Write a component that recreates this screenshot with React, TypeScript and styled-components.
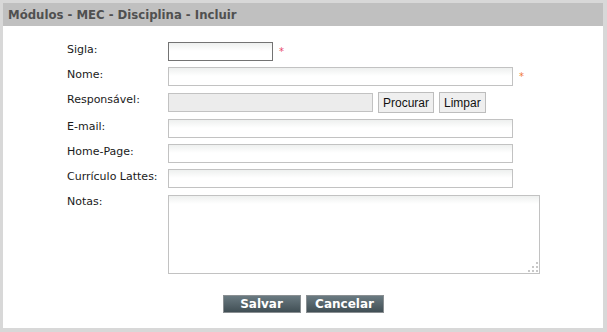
import React from 'react';
import styled, { createGlobalStyle } from 'styled-components';

const GlobalStyle = createGlobalStyle`
  html, body {
    margin: 0;
    padding: 0;
    background: #d8d8d8;
  }
  body {
    font-family: "DejaVu Sans", Verdana, sans-serif;
  }
`;

const Page = styled.div`
  padding: 3px 4px 4px 3px;
  width: 600px;
`;

const Panel = styled.div`
  background: #fff;
  height: 325px;
  display: flex;
  flex-direction: column;
`;

const Header = styled.div`
  height: 23px;
  background: #c0c0c0;
  display: flex;
  align-items: center;
  padding-left: 5px;
  font-family: "DejaVu Sans Condensed", "DejaVu Sans", sans-serif;
  font-weight: bold;
  font-size: 13px;
  color: #505050;
`;

const Form = styled.div`
  display: grid;
  grid-template-columns: 101px 1fr;
  row-gap: 6px;
  padding: 16px 0 0 64px;
`;

const Label = styled.label`
  font-size: 11px;
  color: #1a1a1a;
  padding-top: 1px;
  white-space: nowrap;
`;

const Field = styled.div`
  display: flex;
  align-items: center;
  gap: 5px;
`;

const Input = styled.input<{ $w: number; $dark?: boolean; $disabled?: boolean }>`
  box-sizing: border-box;
  width: ${(p) => p.$w}px;
  height: 19px;
  margin: 0;
  padding: 0 3px;
  border: 1px solid ${(p) => (p.$dark ? '#737373' : '#c2c2c2')};
  background: ${(p) =>
    p.$disabled ? '#ececec' : 'linear-gradient(#eef0ef, #ffffff 8px)'};
  font-size: 11px;
  outline: none;
`;

const Required = styled.span<{ $color: string }>`
  color: ${(p) => p.$color};
  font-size: 10px;
  line-height: 1;
  align-self: center;
  margin-left: 1px;
`;

const SmallButton = styled.button`
  box-sizing: border-box;
  height: 21px;
  padding: 0 4px;
  margin: 0;
  border: 1px solid #bdbdbd;
  background: #efefef;
  font-family: "Liberation Sans", Arial, sans-serif;
  font-size: 12px;
  color: #111;
`;

const AreaWrap = styled.div`
  position: relative;
  width: 372px;
  height: 79px;
  margin-top: 1px;
`;

const TextArea = styled.textarea`
  box-sizing: border-box;
  width: 372px;
  height: 79px;
  margin: 0;
  border: 1px solid #c2c2c2;
  background: linear-gradient(#eef0ef, #ffffff 8px);
  resize: none;
  outline: none;
  display: block;
`;

const Grip = styled.svg`
  position: absolute;
  right: 2px;
  bottom: 2px;
`;

const Actions = styled.div`
  display: flex;
  justify-content: center;
  gap: 5px;
  margin-top: 21px;
`;

const ActionButton = styled.button`
  box-sizing: border-box;
  width: 78px;
  height: 18px;
  padding: 0;
  border: 1px solid #8a8f92;
  background: linear-gradient(#6a7a81, #414f55);
  color: #fff;
  font-family: "DejaVu Sans", Verdana, sans-serif;
  font-weight: bold;
  font-size: 12px;
  line-height: 16px;
`;

const App: React.FC = () => {
  return (
    <>
      <GlobalStyle />
      <Page>
        <Panel>
          <Header>Módulos - MEC - Disciplina - Incluir</Header>
          <Form>
            <Label>Sigla:</Label>
            <Field>
              <Input $w={105} $dark />
              <Required $color="#e8456a">*</Required>
            </Field>

            <Label>Nome:</Label>
            <Field>
              <Input $w={345} />
              <Required $color="#f07a3a">*</Required>
            </Field>

            <Label>Responsável:</Label>
            <Field>
              <Input $w={205} $disabled readOnly />
              <SmallButton>Procurar</SmallButton>
              <SmallButton>Limpar</SmallButton>
            </Field>

            <Label>E-mail:</Label>
            <Field>
              <Input $w={345} />
            </Field>

            <Label>Home-Page:</Label>
            <Field>
              <Input $w={345} />
            </Field>

            <Label>Currículo Lattes:</Label>
            <Field>
              <Input $w={345} />
            </Field>

            <Label>Notas:</Label>
            <AreaWrap>
              <TextArea />
              <Grip width="10" height="10" viewBox="0 0 10 10">
                <g fill="#c8c8c8">
                  <rect x="8" y="0" width="2" height="2" />
                  <rect x="4" y="4" width="2" height="2" />
                  <rect x="8" y="4" width="2" height="2" />
                  <rect x="0" y="8" width="2" height="2" />
                  <rect x="4" y="8" width="2" height="2" />
                  <rect x="8" y="8" width="2" height="2" />
                </g>
              </Grip>
            </AreaWrap>
          </Form>
          <Actions>
            <ActionButton>Salvar</ActionButton>
            <ActionButton>Cancelar</ActionButton>
          </Actions>
        </Panel>
      </Page>
    </>
  );
};

export default App;
